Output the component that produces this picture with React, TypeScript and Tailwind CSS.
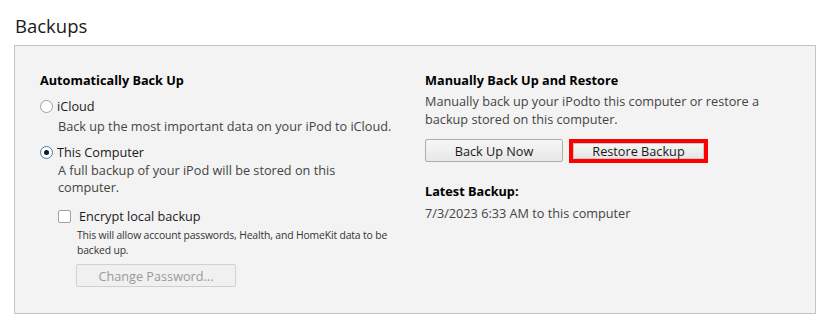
export default function App() {
  const font = { fontFamily: '"Open Sans", "Noto Sans", sans-serif' };
  return (
    <div className="w-[821px] h-[323px] bg-white" style={font}>
      <div className="pl-[15px] pt-[12px] h-[40px] text-[18.5px] leading-[28px] text-[#1a1a1a]">Backups</div>
      <div className="mt-[5px] ml-[14px] w-[802px] h-[269px] border border-[#c4c4c4] bg-[#f3f3f3] grid grid-cols-[385px_1fr] pl-[25px] pt-[24px]">
        <div className="flex flex-col text-[12.7px] leading-[20px]">
          <div className="font-bold text-black">Automatically Back Up</div>
          <div className="mt-[6px] flex items-center gap-[4px] text-[#1a1a1a]">
            <span className="w-[13px] h-[13px] rounded-full border border-[#a0a0a0] bg-white" />
            <span>iCloud</span>
          </div>
          <div className="pl-[18px] text-[#444]">Back up the most important data on your iPod to iCloud.</div>
          <div className="mt-[6px] flex items-center gap-[4px] text-[#1a1a1a]">
            <span className="w-[13px] h-[13px] rounded-full border border-[#3c7fb1] bg-white flex items-center justify-center">
              <span className="w-[5px] h-[5px] rounded-full bg-[#1a1a1a]" />
            </span>
            <span>This Computer</span>
          </div>
          <div className="pl-[18px] text-[#444] leading-[17px] w-[310px]">A full backup of your iPod will be stored on this computer.</div>
          <div className="mt-[10px] ml-[18px] flex items-center gap-[8px] text-[#1a1a1a]">
            <span className="w-[13px] h-[13px] border border-[#a0a0a0] bg-white rounded-[2px]" />
            <span>Encrypt local backup</span>
          </div>
          <div className="pl-[37px] text-[10.4px] leading-[15px] tracking-[-0.15px] text-[#333] w-[360px] mt-[2px]">This will allow account passwords, Health, and HomeKit data to be backed up.</div>
          <div className="ml-[36px] mt-[6px] w-[160px] h-[23px] border border-[#d0d0d0] bg-[#f0f0f0] rounded-[2px] text-[#9a9a9a] flex items-center justify-center">Change Password...</div>
        </div>
        <div className="flex flex-col text-[12.7px] leading-[20px]">
          <div className="font-bold text-black">Manually Back Up and Restore</div>
          <div className="text-[#444] leading-[18px] w-[350px] mt-[2px]">Manually back up your iPodto this computer or restore a backup stored on this computer.</div>
          <div className="mt-[11px] flex items-start gap-[6px]">
            <div className="w-[138px] h-[23px] border border-[#adadad] rounded-[2px] bg-gradient-to-b from-[#f6f6f6] to-[#e8e8e8] flex items-center justify-center text-[#1a1a1a]">Back Up Now</div>
            <div className="w-[139px] h-[24px] border-[4px] border-[#ff0000] flex">
              <div className="flex-1 border border-[#c8c8c8] bg-gradient-to-b from-[#f6f6f6] to-[#e6e6e6] flex items-center justify-center text-[#1a1a1a]">Restore Backup</div>
            </div>
          </div>
          <div className="mt-[18px] font-bold text-black">Latest Backup:</div>
          <div className="mt-[2px] text-[#444]">7/3/2023 6:33 AM to this computer</div>
        </div>
      </div>
    </div>
  );
}
